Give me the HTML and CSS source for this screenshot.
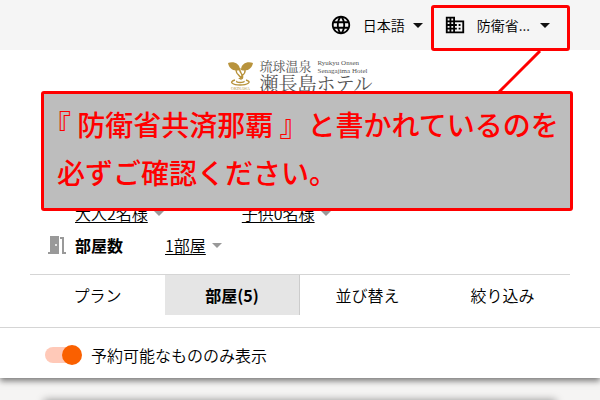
FILE: index.html
```html
<!DOCTYPE html>
<html lang="ja">
<head>
<meta charset="utf-8">
<meta name="viewport" content="width=device-width, initial-scale=1">
<title>瀬長島ホテル</title>
<link rel="stylesheet" href="styles.css">
</head>
<body>
<header class="topbar">
  <button type="button" class="menu-button">
    <svg class="menu-icon" viewBox="0 0 24 24"><path d="M11.99 2C6.47 2 2 6.48 2 12s4.47 10 9.99 10C17.52 22 22 17.52 22 12S17.52 2 11.99 2zm6.93 6h-2.95a15.65 15.65 0 0 0-1.38-3.56A8.03 8.03 0 0 1 18.92 8zM12 4.04c.83 1.2 1.48 2.53 1.91 3.96h-3.82c.43-1.43 1.08-2.76 1.91-3.96zM4.26 14C4.1 13.36 4 12.69 4 12s.1-1.36.26-2h3.38c-.08.66-.14 1.32-.14 2s.06 1.34.14 2H4.26zm.82 2h2.95c.32 1.25.78 2.45 1.38 3.56A7.99 7.99 0 0 1 5.08 16zm2.95-8H5.08a7.99 7.99 0 0 1 4.33-3.56A15.65 15.65 0 0 0 8.03 8zM12 19.96c-.83-1.2-1.48-2.53-1.91-3.96h3.82c-.43 1.43-1.08 2.76-1.91 3.96zM14.34 14H9.66c-.09-.66-.16-1.32-.16-2s.07-1.35.16-2h4.68c.09.65.16 1.32.16 2s-.07 1.34-.16 2zm.25 5.56c.6-1.11 1.06-2.31 1.38-3.56h2.95a8.03 8.03 0 0 1-4.33 3.56zM16.36 14c.08-.66.14-1.32.14-2s-.06-1.34-.14-2h3.38c.16.64.26 1.31.26 2s-.1 1.36-.26 2h-3.38z"/></svg>
    <span>日本語</span>
    <span class="caret"></span>
  </button>
  <button type="button" class="menu-button marked">
    <svg class="menu-icon" viewBox="0 0 24 24"><path d="M12 7V3H2v18h20V7H12zM6 19H4v-2h2v2zm0-4H4v-2h2v2zm0-4H4V9h2v2zm0-4H4V5h2v2zm4 12H8v-2h2v2zm0-4H8v-2h2v2zm0-4H8V9h2v2zm0-4H8V5h2v2zm10 12h-8v-2h2v-2h-2v-2h2v-2h-2V9h8v10zm-2-8h-2v2h2v-2zm0 4h-2v2h2v-2z"/></svg>
    <span>防衛省...</span>
    <span class="caret"></span>
    <svg class="pointer" viewBox="0 0 46 46"><path d="M44 1L2 43"/></svg>
  </button>
</header>

<main class="panel">
  <div class="brand">
    <svg class="brand-mark" viewBox="0 0 28 32">
      <path class="gold" d="M1 4C6 2 13 4 13 11C6 13 2 9 1 4zM26 4C21 2 14 4 14 11C21 13 25 9 26 4z"/>
      <path class="gold-line" d="M9 11C9 17 15 16 14 21M13 9C11 14 18 15 15 20M18 11C19 16 14 16 12 20"/>
      <path class="gold-line" d="M8 21C1 23 6 26 13 26S26 23 19 21M10 22C8 24 18 24 17 22"/>
      <text class="brand-place" x="4" y="31">OKINAWA</text>
    </svg>
    <div class="brand-names">
      <div class="brand-top">
        <span class="brand-spa">琉球温泉</span>
        <span class="brand-latin"><span>Ryukyu Onsen</span><span>Senagajima Hotel</span></span>
      </div>
      <div class="brand-hotel">瀬長島ホテル</div>
    </div>
  </div>

  <div class="booking">
    <div class="guests">
      <button type="button" class="choice"><span class="choice-text">大人2名様</span><span class="caret grey"></span></button>
      <button type="button" class="choice"><span class="choice-text">子供0名様</span><span class="caret grey"></span></button>
    </div>
    <div class="rooms">
      <svg class="door" viewBox="0 0 18 18"><path d="M2 0h9v18H0v-2h2zM12 1h4v15h2v2h-4V3h-2z"/><circle cx="8" cy="9" r="1"/></svg>
      <span class="rooms-label" id="rooms-label">部屋数</span>
      <button type="button" class="choice" aria-describedby="rooms-label"><span class="choice-text">1部屋</span><span class="caret grey"></span></button>
    </div>
  </div>

  <nav class="tabs">
    <button type="button" class="tab">プラン</button>
    <button type="button" class="tab active">部屋(5)</button>
    <button type="button" class="tab">並び替え</button>
    <button type="button" class="tab">絞り込み</button>
  </nav>

  <div class="filter">
    <input type="checkbox" class="switch" id="available" checked>
    <label for="available">予約可能なもののみ表示</label>
  </div>

  <p class="callout">『 防衛省共済那覇 』と書かれているのを<br>必ずご確認ください。</p>
</main>
<section class="results"><div class="card"></div></section>
</body>
</html>
```
FILE: styles.css
```css
* {
  box-sizing: border-box;
}

body {
  display: flex;
  flex-direction: column;
  margin: 0;
  height: 100vh;
  overflow: hidden;
  background: #f5f4f3;
  color: #000;
  font: 350 16px/24px "Noto Sans CJK JP", sans-serif;
}

button {
  margin: 0;
  padding: 0;
  border: 0;
  background: none;
  color: inherit;
  font: inherit;
}

.topbar {
  position: relative;
  z-index: 1;
  display: flex;
  flex-shrink: 0;
  justify-content: flex-end;
  align-items: center;
  gap: 8px;
  height: 50px;
  padding: 0 30px;
  background: #f5f5f5;
}

.menu-button {
  position: relative;
  display: flex;
  align-items: center;
  font-size: 14px;
}

.menu-icon {
  width: 22px;
  height: 22px;
  margin-right: 11px;
  fill: #000;
}

.caret {
  margin-left: 8px;
  border: 5px solid transparent;
  border-top-color: #111;
  border-bottom-width: 0;
}

.caret.grey {
  margin-left: 6px;
  border-top-color: #999;
}

.marked {
  height: 46px;
  margin-top: 6px;
  padding: 0 17px 6px 10px;
  border: 3px solid #f00;
  border-radius: 3px;
}

.marked .caret {
  margin-left: 10px;
}

.pointer {
  position: absolute;
  top: 42px;
  right: 25px;
  width: 46px;
  height: 46px;
  fill: none;
  stroke: #f00;
  stroke-width: 3;
}

.panel {
  position: relative;
  flex-shrink: 0;
  background: #fff;
  box-shadow: 0 3px 6px rgba(0, 0, 0, 0.5);
}

.brand {
  display: flex;
  justify-content: center;
  gap: 4px;
  height: 151px;
  padding-top: 9px;
}

.brand-mark {
  width: 28px;
  height: 32px;
}

.gold {
  fill: #b8933c;
}

.gold-line {
  fill: none;
  stroke: #b8933c;
  stroke-width: 1.4;
}

.brand-place {
  fill: #b8933c;
  font: 4px "Liberation Serif", serif;
}

.brand-names {
  color: #555;
  font-family: "Liberation Serif", "Noto Serif CJK JP", "Noto Sans CJK JP", serif;
  font-weight: 400;
}

.brand-top {
  display: flex;
  align-items: center;
  gap: 6px;
  height: 16px;
}

.brand-spa {
  font-size: 13px;
  line-height: 14px;
}

.brand-latin {
  display: flex;
  flex-direction: column;
  font-size: 7px;
  line-height: 8px;
}

.brand-hotel {
  font-size: 19px;
  line-height: 20px;
}

.booking {
  padding: 0 48px 17px;
}

.guests {
  display: flex;
  gap: 78px;
  padding-left: 27px;
}

.choice {
  display: flex;
  align-items: center;
}

.choice-text {
  text-decoration: underline;
  text-underline-offset: 2px;
}

.rooms {
  display: flex;
  align-items: center;
  margin-top: 8px;
}

.door {
  width: 18px;
  height: 18px;
  margin-right: 9px;
  fill: #999;
}

.door circle {
  fill: #fff;
}

.rooms-label {
  margin-right: 42px;
  font-weight: 700;
}

.tabs {
  display: grid;
  grid-template-columns: repeat(4, 1fr);
  margin: 0 30px;
  padding-bottom: 12px;
  border-top: 1px solid #d5d5d5;
}

.tab {
  height: 40px;
}

.tab.active {
  border-right: 1px solid #ccc;
  background: #e5e5e5;
  font-weight: 700;
}

.filter {
  display: flex;
  align-items: center;
  gap: 10px;
  height: 51px;
  padding: 4px 45px 0;
  border-top: 1px solid #d5d5d5;
}

.switch {
  position: relative;
  width: 36px;
  height: 16px;
  margin: 0;
  border-radius: 8px;
  background: #ffc9b8;
  appearance: none;
}

.switch::before {
  content: "";
  position: absolute;
  top: -2px;
  right: -1px;
  width: 20px;
  height: 20px;
  border-radius: 50%;
  background: #fa6000;
}

.callout {
  position: absolute;
  top: 41px;
  right: 27px;
  left: 41px;
  margin: 0;
  padding: 6px 0 12px 13px;
  border: 3px solid #f00;
  border-radius: 3px;
  background: #bdbdbd;
  color: #f00;
  font-size: 28px;
  font-weight: 500;
  line-height: 48px;
  white-space: nowrap;
  text-spacing-trim: trim-start;
}

.results {
  flex: 1 1 0;
  min-height: 0;
  overflow: hidden;
  padding: 22px 44px 0;
}

.card {
  height: 80px;
  background: #fff;
  box-shadow: 0 0 8px rgba(0, 0, 0, 0.4);
}
```
